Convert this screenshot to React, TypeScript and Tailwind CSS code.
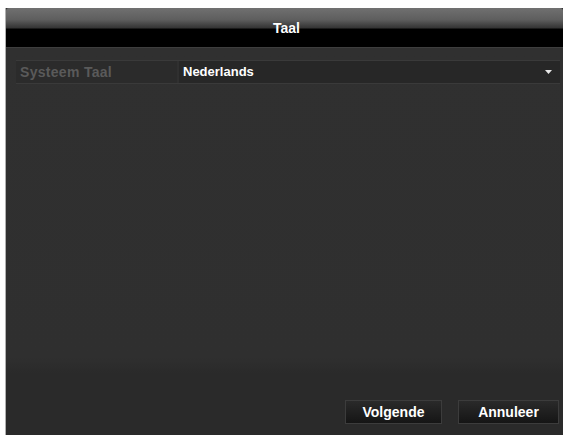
import React from "react";

export default function App() {
  return (
    <div
      className="w-[565px] h-[435px] bg-white pt-[8px] pl-[5px] pr-[2px] flex overflow-hidden"
      style={{ fontFamily: '"Liberation Sans", Arial, sans-serif' }}
    >
      <div className="flex-1 flex flex-col border-l border-[#b0b0b0] bg-[#2e2e2e]">
        {/* Title bar */}
        <div className="h-[39px] flex items-center justify-center bg-[linear-gradient(to_bottom,#707070_0%,#5e5e5e_30%,#363636_50%,#000_55%,#000_100%)] rounded-tl-[3px] rounded-tr-[3px]">
          <span className="text-white text-[14px] font-bold mt-[2px] ml-[4px]">Taal</span>
        </div>
        <div className="h-[1px] bg-[#3e3e3e]" />
        {/* Body */}
        <div className="flex-1 flex flex-col bg-[linear-gradient(to_bottom,#303030_0%,#2f2f2f_80%,#2a2a2a_84%,#2a2a2a_100%)]">
          <div className="mt-[12px] ml-[10px] mr-[3px] h-[24px] flex border-t border-b border-[#3a3a3a]">
            <div className="w-[161px] bg-[#2b2b2b] flex items-center pl-[4px] mr-[2px]">
              <span className="text-[#5a5a5a] text-[14px] font-bold tracking-[0.3px]">Systeem Taal</span>
            </div>
            <div className="flex-1 bg-[#272727] flex items-center pl-[4px] pr-[8px] justify-between">
              <span className="text-white text-[13px] font-bold">Nederlands</span>
              <svg width="7" height="4" viewBox="0 0 7 4">
                <path d="M0 0 L7 0 L3.5 4 Z" fill="#e8e8e8" />
              </svg>
            </div>
          </div>
          <div className="flex-1" />
          <div className="flex justify-end gap-[16px] pr-[4px] pb-[11px]">
            <button className="w-[97px] h-[24px] bg-[linear-gradient(to_bottom,#2a2a2a,#151515)] border border-[#3c3c3c] text-white text-[14px] font-bold flex items-center justify-center">
              Volgende
            </button>
            <button className="w-[101px] h-[24px] bg-[linear-gradient(to_bottom,#2a2a2a,#151515)] border border-[#3c3c3c] text-white text-[14px] font-bold flex items-center justify-center">
              Annuleer
            </button>
          </div>
        </div>
      </div>
    </div>
  );
}
